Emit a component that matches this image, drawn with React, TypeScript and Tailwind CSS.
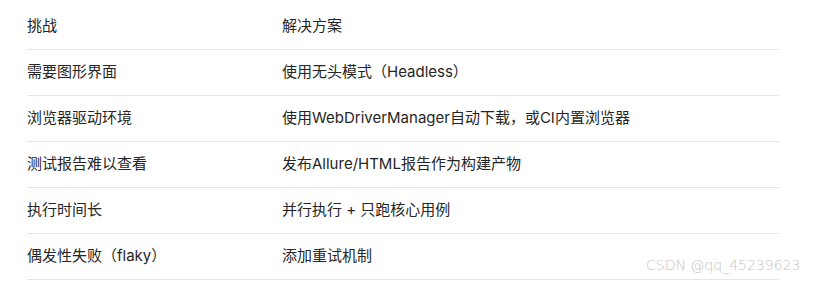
import React from "react";

const rows: [string, string][] = [
  ["需要图形界面", "使用无头模式（Headless）"],
  ["浏览器驱动环境", "使用WebDriverManager自动下载，或CI内置浏览器"],
  ["测试报告难以查看", "发布Allure/HTML报告作为构建产物"],
  ["执行时间长", "并行执行 + 只跑核心用例"],
  ["偶发性失败（flaky）", "添加重试机制"],
];

export default function App() {
  return (
    <div
      className="relative w-[816px] h-[281px] bg-white text-[#262626] overflow-hidden"
      style={{ fontFamily: 'Inter, "Noto Sans CJK SC", sans-serif' }}
    >
      <div className="ml-[27px] mt-[4px] w-[752px] text-[15px]">
        <div className="grid grid-cols-[255px_1fr] h-[46px] items-center border-b border-[#e5e5e5]">
          <div>挑战</div>
          <div>解决方案</div>
        </div>
        {rows.map(([a, b]) => (
          <div
            key={a}
            className="grid grid-cols-[255px_1fr] h-[46px] items-center border-b border-[#e5e5e5]"
          >
            <div>{a}</div>
            <div>{b}</div>
          </div>
        ))}
      </div>
      <div
        className="absolute left-[646px] top-[256px] text-[14px] font-extralight text-[#c4c4c4] leading-[18px]"
        style={{ fontFamily: '"DejaVu Sans", sans-serif' }}
      >
        CSDN @qq_45239623
      </div>
    </div>
  );
}
